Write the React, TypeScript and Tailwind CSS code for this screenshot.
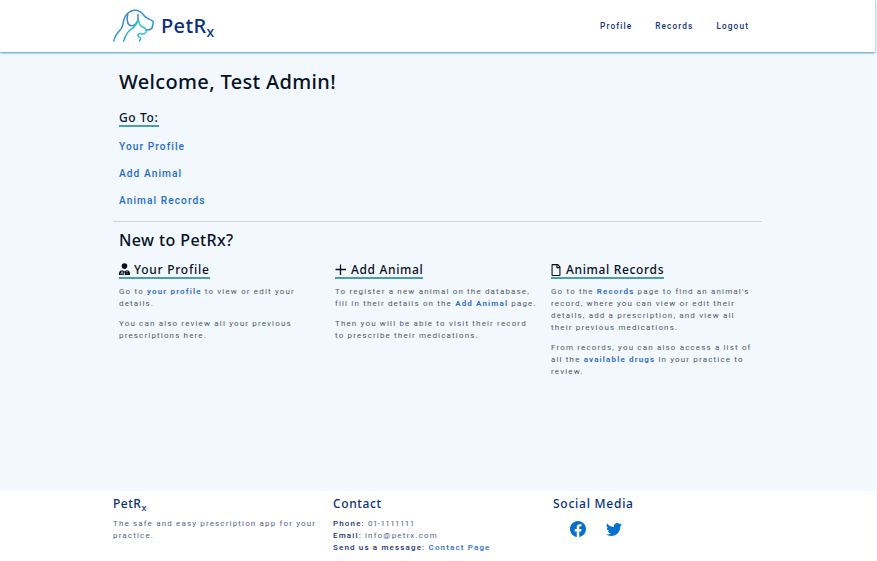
import type { ReactNode } from "react";
import { FaRegFile } from "react-icons/fa";
import { BsFacebook, BsTwitter } from "react-icons/bs";

const heading = "font-['Noto_Sans',sans-serif] font-medium";

function Logo() {
  return (
    <svg width="42" height="34" viewBox="0 0 42 34" fill="none" strokeWidth="1.5" strokeLinecap="round" strokeLinejoin="round">
      <defs>
        <linearGradient id="outer" x1="0" y1="34" x2="42" y2="0" gradientUnits="userSpaceOnUse">
          <stop offset="0" stopColor="#2aa4dc" />
          <stop offset="0.5" stopColor="#4285c8" />
          <stop offset="1" stopColor="#2998dc" />
        </linearGradient>
        <linearGradient id="inner" x1="10" y1="34" x2="32" y2="14" gradientUnits="userSpaceOnUse">
          <stop offset="0" stopColor="#2a9fd6" />
          <stop offset="1" stopColor="#2fcbcf" />
        </linearGradient>
      </defs>
      <path stroke="url(#outer)" d="M0.800 32C2 26 5 23.500 8 20C10.500 17 10 12 11.500 9C13 5 17 1.500 21 1.200C25 1 28.500 2.500 31 6.500C33 9.500 37 10 40.300 12.500L39.500 17.500C39 20 36 21.200 32.500 20.800" />
      <path stroke="url(#outer)" d="M14.800 5C13.500 10 14 16 18 16.800C22 17 24 14 25 10.500L25 5.500" />
      <path stroke="url(#inner)" d="M10.500 32C12.500 28 13 24.500 16 22C20 19.500 23.500 16 25.300 11C26.500 13 25.500 16 28.500 17.300C31.500 18.500 33.500 20 33.300 22C33 24.500 30.500 25.300 28.500 24.700C27 24.300 25 25 24.800 26.500C25 28.500 29.500 28 26.500 32" />
    </svg>
  );
}

function Doctor() {
  return (
    <svg width="11" height="12" viewBox="0 0 11 12" className="mb-px shrink-0">
      <circle cx="5.500" cy="3.100" r="2.800" fill="#07121f" />
      <path d="M0 12V10.500C0 8.500 1.500 7.300 3.200 7L5.500 8.500L7.800 7C9.500 7.300 11 8.500 11 10.500V12Z" fill="#07121f" />
      <path d="M3 7.500V9.500M2 11.300V10.200Q3 9 4 10.200V11.300M8 7.500V9.300M8 10.300V10.800M5.500 9.500V12" stroke="#f2f8fe" strokeWidth="0.800" fill="none" />
    </svg>
  );
}

function Plus() {
  return (
    <svg width="12" height="12" viewBox="0 0 12 12" className="shrink-0">
      <path d="M5.500 0.500V11M0.500 5.500H11" stroke="#07121f" strokeWidth="1.300" />
    </svg>
  );
}

function Title({ icon, width, children }: { icon?: ReactNode; width: string; children: ReactNode }) {
  return (
    <h3 className={`${heading} ${width} flex h-[18px] items-center gap-1 border-b-2 border-[#45a0b0] pt-px text-[12px] leading-4 whitespace-nowrap text-[#07121f]`}>
      {icon}
      {children}
    </h3>
  );
}

function Lines({ children }: { children: ReactNode }) {
  return <p className="mb-2 text-[8px] leading-3 whitespace-nowrap text-[#4d5862]">{children}</p>;
}

function Line({ t = "tracking-[1.15px]", children }: { t?: string; children: ReactNode }) {
  return <span className={`block ${t}`}>{children}</span>;
}

function Link({ children }: { children: ReactNode }) {
  return <a className="font-semibold text-[#2a69c7]">{children}</a>;
}

export default function App() {
  return (
    <div className="flex h-[561px] w-[877px] flex-col overflow-hidden bg-[#f2f8fe] pr-px font-['Roboto',sans-serif]">
      <header className="relative mr-px h-[52px] shrink-0 bg-white pl-px shadow-[0_1px_2px_#4695cc]">
        <div className="mx-auto flex h-full w-[650px] items-center justify-between">
          <div className="flex items-center gap-[6px]">
            <Logo />
            <span className={`${heading} text-[20px] leading-6 tracking-[0.4px] text-[#082f7b]`}>
              PetR<sub className="-bottom-1 text-[14px]">x</sub>
            </span>
          </div>
          <nav className="mr-[14px] flex gap-[23px] pt-px text-[8.3px] font-medium tracking-[1.1px] text-[#153373]">
            <a>Profile</a>
            <a>Records</a>
            <a>Logout</a>
          </nav>
        </div>
      </header>

      <main className="mx-auto h-[439px] w-[650px] shrink-0">
        <section className="mr-px h-[170px] border-b border-[#cbd5dc] pl-[6px]">
          <h1 className={`${heading} pt-[17px] text-[20px] leading-[26px] tracking-[0.34px] text-[#07121f]`}>Welcome, Test Admin!</h1>
          <div className="mt-[14px] tracking-[0.6px]">
            <Title width="w-10">Go To:</Title>
          </div>
          <nav className="mt-[14px] flex flex-col gap-[15px] text-[10.2px] leading-3 font-medium tracking-[1.05px] text-[#256dc7]">
            <a>Your Profile</a>
            <a>Add Animal</a>
            <a>Animal Records</a>
          </nav>
        </section>
        <section className="pl-[6px]">
          <h2 className={`${heading} pt-2 text-[16px] leading-5 tracking-[0.4px] text-[#07121f]`}>New to PetRx?</h2>
          <div className="mt-[11px] grid grid-cols-[216px_216px_212px] tracking-[0.65px]">
            <article>
              <Title width="w-[91px]" icon={<Doctor />}><span className="tracking-[0.75px]">Your Profile</span></Title>
              <div className="mt-[7px]">
                <Lines>
                  <Line>Go to <Link>your profile</Link> to view or edit your</Line>
                  <Line>details.</Line>
                </Lines>
                <Lines>
                  <Line>You can also review all your previous</Line>
                  <Line>prescriptions here.</Line>
                </Lines>
              </div>
            </article>
            <article>
              <Title width="w-[88px]" icon={<Plus />}>Add Animal</Title>
              <div className="mt-[7px]">
                <Lines>
                  <Line>To register a new animal on the database,</Line>
                  <Line>fill in their details on the <Link>Add Animal</Link> page.</Line>
                </Lines>
                <Lines>
                  <Line>Then you will be able to visit their record</Line>
                  <Line>to prescribe their medications.</Line>
                </Lines>
              </div>
            </article>
            <article>
              <Title width="w-[113px]" icon={<FaRegFile size={12} className="-ml-px shrink-0" />}>Animal Records</Title>
              <div className="mt-[7px]">
                <Lines>
                  <Line>Go to the <Link>Records</Link> page to find an animal's</Line>
                  <Line>record, where you can view or edit their</Line>
                  <Line>details, add a prescription, and view all</Line>
                  <Line>their previous medications.</Line>
                </Lines>
                <Lines>
                  <Line>From records, you can also access a list of</Line>
                  <Line>all the <Link>available drugs</Link> in your practice to</Line>
                  <Line>review.</Line>
                </Lines>
              </div>
            </article>
          </div>
        </section>
      </main>

      <footer className="h-[70px] shrink-0 bg-white text-[8px] leading-3 text-[#526387]">
        <div className="mx-auto grid w-[650px] grid-cols-[220px_220px_210px] pt-[5px] whitespace-nowrap">
          <section>
            <h4 className={`${heading} h-[22px] text-[12px] leading-4 tracking-[0.5px] text-[#082f7b]`}>
              PetR<sub className="-bottom-[3px] text-[9px]">x</sub>
            </h4>
            <Line>The safe and easy prescription app for your</Line>
            <Line>practice.</Line>
          </section>
          <section>
            <h4 className={`${heading} h-[22px] text-[12px] leading-4 tracking-[0.6px] text-[#082f7b]`}>Contact</h4>
            <Line><b className="font-medium text-[#153373]">Phone:</b> <span className="tracking-[0.4px]">01-1111111</span></Line>
            <Line><b className="font-medium text-[#153373]">Email:</b> info@petrx.com</Line>
            <Line><b className="font-medium text-[#153373]">Send us a message:</b> <a className="font-medium text-[#256dc7]">Contact Page</a></Line>
          </section>
          <section>
            <h4 className={`${heading} h-[22px] text-[12px] leading-4 tracking-[0.75px] text-[#082f7b]`}>Social Media</h4>
            <div className="ml-[17px] flex gap-5 pt-[3px] text-[#0670cf]">
              <BsFacebook size={16} />
              <BsTwitter size={16} />
            </div>
          </section>
        </div>
      </footer>
    </div>
  );
}
